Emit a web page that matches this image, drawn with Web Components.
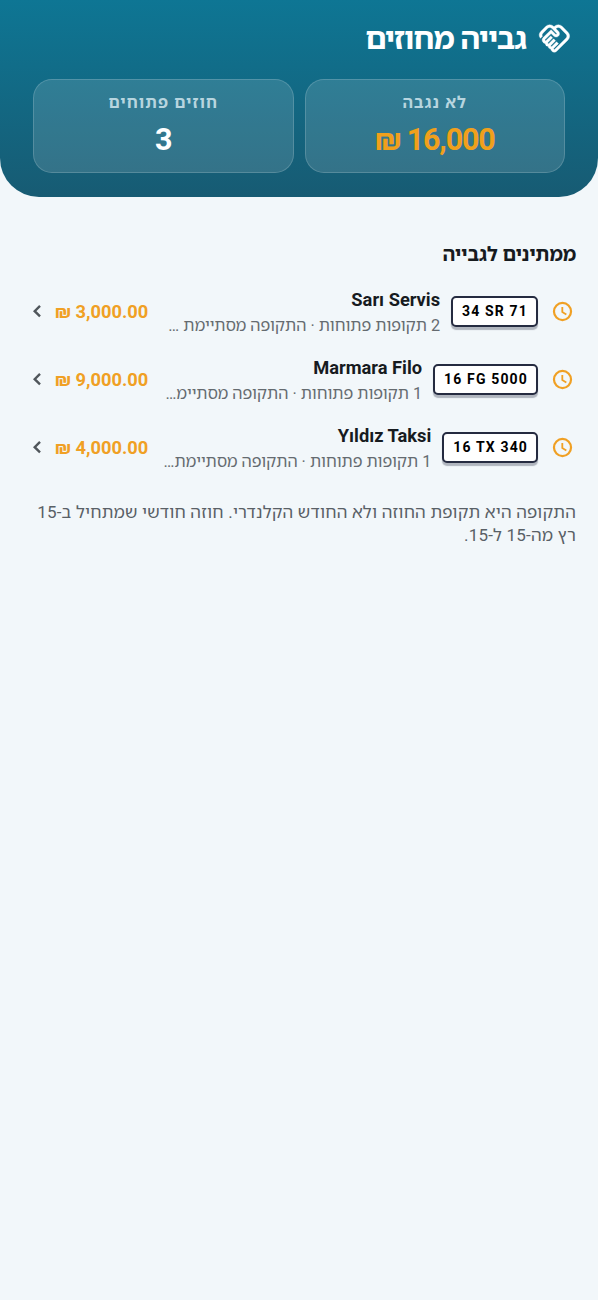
<!DOCTYPE html>
<html lang="he" dir="rtl">
<head>
<meta charset="utf-8">
<title>גבייה מחוזים</title>
<style>
html,body{margin:0;background:#f2f7fa}
body{font-family:Roboto,"Noto Sans Hebrew","Open Sans","Noto Sans",sans-serif;color:#171b1f;height:1300px;overflow:hidden}
</style>
</head>
<body>
<collection-page></collection-page>
<script>
const define = (name, html) => customElements.define(name, class extends HTMLElement {
  constructor() {
    super();
    const t = document.createElement('template');
    t.innerHTML = html;
    this.attachShadow({mode: 'open'}).append(t.content.cloneNode(true));
  }
});

define('handshake-icon', `<style>:host{display:block;width:33px;height:33px;flex:none}svg{display:block;width:100%;height:100%}</style>
<svg viewBox="0 0 24 24" fill="currentColor" stroke="currentColor" stroke-width=".25"><path d="M12.22 19.85c-.18.18-.5.21-.71 0-.18-.18-.21-.5 0-.71l3.39-3.39-1.41-1.41-3.39 3.39c-.19.2-.51.19-.71 0-.21-.21-.18-.53 0-.71l3.39-3.39-1.41-1.41-3.39 3.39c-.18.18-.5.21-.71 0-.19-.19-.19-.51 0-.71l3.39-3.39-1.42-1.41-3.39 3.39c-.18.18-.5.21-.71 0-.19-.2-.19-.51 0-.71L9.52 8.4l1.87 1.86c.95.95 2.59.94 3.54 0 .98-.98.98-2.56 0-3.54l-1.86-1.86.28-.28c.78-.78 2.05-.78 2.83 0l4.24 4.24c.78.78.78 2.05 0 2.83l-8.2 8.2zm9.61-6.78a4.008 4.008 0 0 0 0-5.66l-4.24-4.24a4.008 4.008 0 0 0-5.66 0l-.28.28-.28-.28a4.008 4.008 0 0 0-5.66 0L2.17 6.71a3.992 3.992 0 0 0-.4 5.19l1.45-1.45a2 2 0 0 1 .37-2.33l3.54-3.54c.78-.78 2.05-.78 2.83 0l3.56 3.56c.18.18.21.5 0 .71-.21.21-.53.18-.71 0L9.52 5.57l-5.8 5.79c-.98.97-.98 2.56 0 3.54.39.39.89.63 1.42.7a2.458 2.458 0 0 0 2.12 2.12 2.458 2.458 0 0 0 2.12 2.12c.07.54.31 1.03.7 1.42.47.47 1.1.73 1.77.73s1.3-.26 1.77-.73l8.21-8.19z"/></svg>`);

define('clock-icon', `<style>:host{display:block;width:23px;height:23px;flex:none;color:#f0a024}svg{display:block;width:100%;height:100%}</style>
<svg viewBox="0 0 24 24" fill="none" stroke="currentColor" stroke-width="2.3"><circle cx="12" cy="12" r="8.900"/><path d="M11.800 7.200v5.400l4.200 2.500" stroke-width="1.900"/></svg>`);

define('chevron-icon', `<style>:host{display:block;width:22px;height:22px;flex:none;color:#50565b}svg{display:block;width:100%;height:100%}</style>
<svg viewBox="0 0 24 24" fill="none" stroke="currentColor" stroke-width="2.6"><path d="M15.300 6.500 9.500 12.200l5.800 5.700"/></svg>`);

define('page-header', `<style>
:host{display:block;box-sizing:border-box;height:197px;padding:18px 33px 0;border-radius:0 0 39px 39px;background:linear-gradient(#0e7694,#175b73);color:#fff}
.title{display:flex;align-items:center;gap:12px;height:40px;margin-right:-6px}
h1{margin:0;font-size:30.500px;line-height:40px;font-weight:700;letter-spacing:-1px;padding-top:2px}
.cards{display:grid;grid-template-columns:1fr 1fr;gap:11px;margin-top:21px}
</style><div class="title"><handshake-icon></handshake-icon><h1><slot></slot></h1></div><div class="cards"><slot name="stat"></slot></div>`);

define('stat-card', `<style>
:host{display:flex;flex-direction:column;align-items:center;box-sizing:border-box;height:94px;padding-top:12px;border:1.4px solid rgba(255,255,255,.17);border-radius:19px;background:rgba(255,255,255,.13)}
.label{font-size:16px;line-height:22px;font-weight:700;letter-spacing:1.1px;color:#b7d5df}
.value{font-size:30.500px;line-height:38px;font-weight:700;margin-top:7px;letter-spacing:-1.2px;color:var(--value,#fff)}
</style><span class="label"><slot name="label"></slot></span><span class="value"><slot></slot></span>`);

define('plate-tag', `<style>
:host{display:block;flex:none;direction:ltr;box-sizing:border-box;height:31px;padding:0 8px 0 9px;border:2px solid #252b40;border-radius:5px;background:#fff;box-shadow:0 3px 1px rgba(37,43,64,.32);font-size:14px;line-height:27px;font-weight:700;letter-spacing:1.15px;color:#000;white-space:nowrap}
</style><slot></slot>`);

define('contract-row', `<style>
:host{display:flex;align-items:center;height:68px;padding:0 2px 0 5px}
plate-tag{margin-right:13px}
.info{flex:1;min-width:0;margin-right:11px;white-space:nowrap;padding-top:2px}
.name{font-size:18.300px;line-height:25px;font-weight:700}
.note{font-size:16.250px;line-height:25px;color:#656b70;padding-top:1px;margin-bottom:-1px}
.sum{font-size:18.300px;line-height:24px;font-weight:700;color:#f0a024;white-space:nowrap;padding-top:1px}
chevron-icon{margin-right:7px;margin-left:-1px}
</style><clock-icon></clock-icon><plate-tag><slot name="plate"></slot></plate-tag><div class="info"><div class="name"><slot name="name"></slot></div><div class="note"><slot></slot></div></div><div class="sum"><slot name="sum"></slot></div><chevron-icon></chevron-icon>`);

define('section-title', `<style>:host{display:block;font-size:19.500px;line-height:28px;font-weight:700;letter-spacing:-.1px;padding-top:1px}</style><slot></slot>`);
define('foot-note', `<style>:host{display:block;font-size:17px;line-height:23px;letter-spacing:.2px;color:#596066;white-space:nowrap}</style><slot></slot>`);

define('collection-page', `<style>
:host{display:block}
main{display:block;padding:43px 22px 0}
.list{margin-top:8px}
foot-note{margin-top:20px}
</style>
<page-header>גבייה מחוזים
<stat-card slot="stat" style="--value:#f0a01c"><span slot="label">לא נגבה</span>16,000 ₪</stat-card>
<stat-card slot="stat"><span slot="label">חוזים פתוחים</span>3</stat-card>
</page-header>
<main>
<section-title>ממתינים לגבייה</section-title>
<div class="list">
<contract-row><span slot="plate">34 SR 71</span><span slot="name">Sarı Servis</span>2 תקופות פתוחות · התקופה מסתיימת …<span slot="sum">3,000.00 ₪</span></contract-row>
<contract-row><span slot="plate">16 FG 5000</span><span slot="name">Marmara Filo</span>1 תקופות פתוחות · התקופה מסתיימ…<span slot="sum">9,000.00 ₪</span></contract-row>
<contract-row><span slot="plate">16 TX 340</span><span slot="name">Yıldız Taksi</span>1 תקופות פתוחות · התקופה מסתיימת…<span slot="sum">4,000.00 ₪</span></contract-row>
</div>
<foot-note>התקופה היא תקופת החוזה ולא החודש הקלנדרי. חוזה חודשי שמתחיל ב-15<br>רץ מה-15 ל-15.</foot-note>
</main>`);
</script>
</body>
</html>
